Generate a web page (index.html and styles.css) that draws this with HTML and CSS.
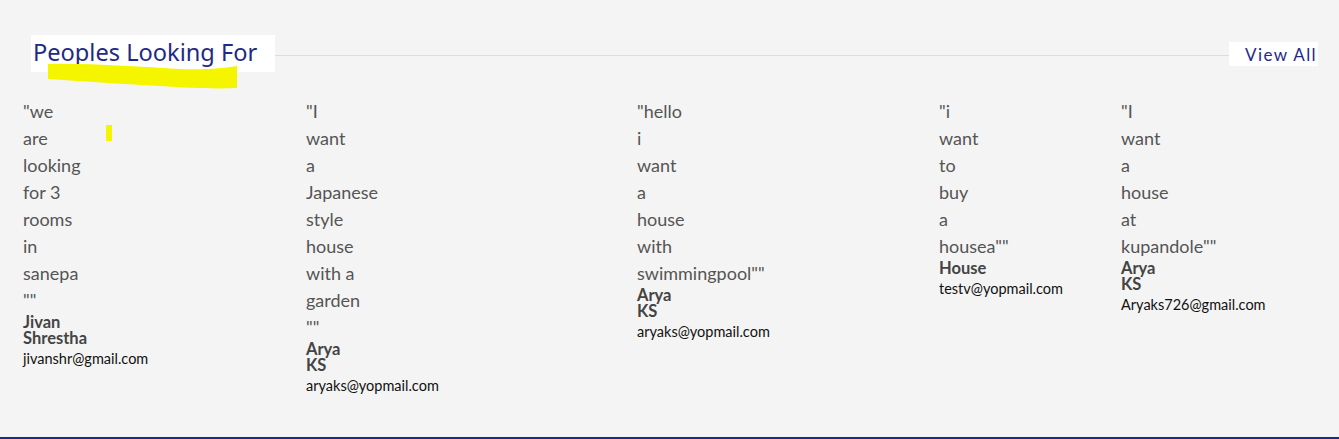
FILE: index.html
```html
<!DOCTYPE html>
<html lang="en">
<head>
<meta charset="utf-8">
<title>Peoples Looking For</title>
<link rel="stylesheet" href="styles.css">
</head>
<body>
<main class="page">
  <section class="looking">
    <div class="head">
      <h2 class="title">Peoples Looking For</h2>
      <span class="rule"></span>
      <a class="view-all" href="#">View All</a>
    </div>
    <div class="cards">
      <article class="card">
        <p class="quote quote-narrow">"we are looking for 3 rooms in sanepa ""</p>
        <h3 class="name">Jivan Shrestha</h3>
        <p class="email">jivanshr@gmail.com</p>
      </article>
      <article class="card">
        <p class="quote quote-wide">"I want a Japanese style house with a garden ""</p>
        <h3 class="name">Arya KS</h3>
        <p class="email">aryaks@yopmail.com</p>
      </article>
      <article class="card">
        <p class="quote quote-narrow">"hello i want a house with swimmingpool""</p>
        <h3 class="name">Arya KS</h3>
        <p class="email">aryaks@yopmail.com</p>
      </article>
      <article class="card">
        <p class="quote quote-narrow">"i want to buy a housea""</p>
        <h3 class="name">House</h3>
        <p class="email">testv@yopmail.com</p>
      </article>
      <article class="card">
        <p class="quote quote-narrow">"I want a house at kupandole""</p>
        <h3 class="name">Arya KS</h3>
        <p class="email">Aryaks726@gmail.com</p>
      </article>
    </div>
  </section>
  <svg class="marks" width="1339" height="439" viewBox="0 0 1339 439" aria-hidden="true">
    <path d="M48 64 C90 63 140 67 180 69 C205 70 225 68 237 66 L237 88 C215 89 190 88 160 86 C120 84 80 81 48 79 Z" fill="#f5f500"/>
    <rect x="106" y="125" width="6" height="16" fill="#f5f500"/>
  </svg>
</main>
</body>
</html>
```

FILE: styles.css
```css
* {
  box-sizing: border-box;
}

html, body {
  margin: 0;
  padding: 0;
  background: #f4f4f4;
}

.page {
  position: relative;
  height: 439px;
  background: #f4f4f4;
  border-bottom: 2px solid #1f2a86;
  font-family: Lato, "Liberation Sans", sans-serif;
  overflow: hidden;
}

.looking {
  padding-top: 35px;
}

.head {
  display: flex;
  align-items: center;
  padding-left: 31px;
  padding-right: 21px;
}

.title {
  margin: 0;
  background: #fff;
  height: 37px;
  width: 244px;
  padding: 0 0 3px 2px;
  display: flex;
  align-items: center;
  font-family: "Noto Sans", sans-serif;
  font-weight: 400;
  font-size: 23.6px;
  letter-spacing: 0;
  color: #1f2a86;
  white-space: nowrap;
}

.rule {
  flex: 1;
  height: 1px;
  background: #dddddd;
  margin-top: 4px;
}

.view-all {
  background: #fff;
  height: 24px;
  width: 89px;
  padding-left: 16px;
  display: flex;
  align-items: center;
  font-family: Lato, sans-serif;
  font-size: 17px;
  letter-spacing: 1.4px;
  color: #1f2a86;
  text-decoration: none;
  margin-top: 1px;
  white-space: nowrap;
}

.cards {
  display: grid;
  grid-template-columns: 283px 331px 302px 182px 1fr;
  padding-left: 23px;
  margin-top: 26px;
}

.card {
  display: flex;
  flex-direction: column;
  align-items: flex-start;
}

.quote {
  margin: 0;
  font-size: 18px;
  line-height: 27px;
  color: #555555;
}

.quote-narrow {
  width: 40px;
}

.quote-wide {
  width: 49px;
}

.name {
  margin: 0;
  width: min-content;
  font-size: 16.5px;
  line-height: 16px;
  font-weight: 700;
  color: #444444;
}

.email {
  margin: 4px 0 0;
  font-size: 14.5px;
  line-height: 18px;
  color: #111111;
  white-space: nowrap;
}

.marks {
  position: absolute;
  left: 0;
  top: 0;
  pointer-events: none;
}
```
